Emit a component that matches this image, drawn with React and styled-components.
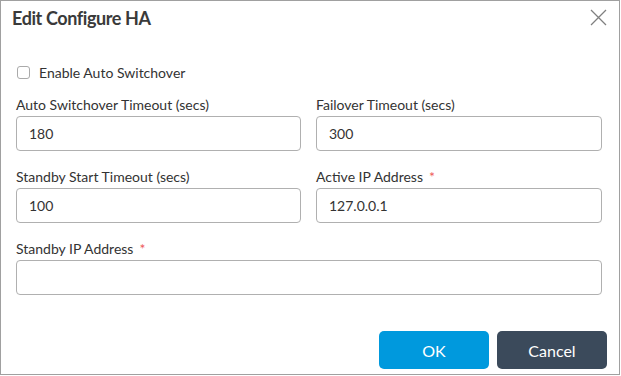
import React from 'react';
import styled, { createGlobalStyle } from 'styled-components';

const GlobalStyle = createGlobalStyle`
  html, body {
    margin: 0;
    padding: 0;
    background: #ffffff;
  }
  * {
    box-sizing: border-box;
  }
`;

const Dialog = styled.div`
  width: 620px;
  height: 375px;
  border: 1px solid #a0a0a0;
  background: #fff;
  font-family: Lato, "Open Sans", sans-serif;
  color: #333;
  display: flex;
  flex-direction: column;
`;

const Header = styled.div`
  display: flex;
  justify-content: space-between;
  align-items: center;
  height: 33px;
  padding: 0 12px 0 11px;
`;

const Title = styled.h2`
  margin: 0;
  font-size: 18px;
  font-weight: 700;
  color: #3a3a3a;
  letter-spacing: -0.4px;
`;

const CloseButton = styled.button`
  border: none;
  background: none;
  padding: 0;
  width: 18px;
  height: 18px;
  display: flex;
  align-items: center;
  justify-content: center;
  cursor: pointer;
`;

const Body = styled.div`
  padding: 30px 17px 0 15px;
  display: flex;
  flex-direction: column;
`;

const CheckRow = styled.label`
  display: flex;
  align-items: center;
  gap: 9px;
  font-size: 14px;
  color: #333;
  padding-left: 1px;
  height: 16px;
  margin-bottom: 17px;
`;

const Box = styled.span`
  width: 13px;
  height: 13px;
  border: 1px solid #aaa;
  border-radius: 3px;
  background: #fff;
`;

const Grid = styled.div`
  display: grid;
  grid-template-columns: 285px 286px;
  column-gap: 15px;
  row-gap: 18px;
`;

const Field = styled.div`
  display: flex;
  flex-direction: column;
  grid-column: ${p => (p.$full ? '1 / -1' : 'auto')};
`;

const Label = styled.div`
  font-size: 14px;
  color: #333;
  height: 16px;
  line-height: 16px;
  margin-bottom: 3px;
`;

const Req = styled.span`
  color: #ee5a5a;
  margin-left: 6px;
`;

const Input = styled.input`
  height: 35px;
  width: 100%;
  border: 1px solid #b0b0b0;
  border-radius: 4px;
  padding: 0 12px;
  font-family: Lato, "Open Sans", sans-serif;
  font-size: 14px;
  color: #333;
  outline: none;
`;

const Footer = styled.div`
  margin-top: auto;
  display: flex;
  justify-content: flex-end;
  gap: 8px;
  padding: 0 12px 5px 0;
`;

const Button = styled.button`
  width: 110px;
  height: 38px;
  border: none;
  border-radius: 5px;
  background: ${p => (p.$primary ? '#0099dd' : '#3b4a5b')};
  color: #fff;
  font-family: Lato, "Open Sans", sans-serif;
  font-size: 16px;
  cursor: pointer;
`;

function XIcon() {
  return (
    <svg width="17" height="17" viewBox="0 0 17 17">
      <path d="M1 1 L16 16 M16 1 L1 16" stroke="#808080" strokeWidth="1.3" fill="none" />
    </svg>
  );
}

export default function App() {
  return (
    <>
      <GlobalStyle />
      <Dialog>
        <Header>
          <Title>Edit Configure HA</Title>
          <CloseButton aria-label="Close"><XIcon /></CloseButton>
        </Header>
        <Body>
          <CheckRow>
            <Box />
            Enable Auto Switchover
          </CheckRow>
          <Grid>
            <Field>
              <Label>Auto Switchover Timeout (secs)</Label>
              <Input defaultValue="180" />
            </Field>
            <Field>
              <Label>Failover Timeout (secs)</Label>
              <Input defaultValue="300" />
            </Field>
            <Field>
              <Label>Standby Start Timeout (secs)</Label>
              <Input defaultValue="100" />
            </Field>
            <Field>
              <Label>Active IP Address<Req>*</Req></Label>
              <Input defaultValue="127.0.0.1" />
            </Field>
            <Field $full>
              <Label>Standby IP Address<Req>*</Req></Label>
              <Input defaultValue="" />
            </Field>
          </Grid>
        </Body>
        <Footer>
          <Button $primary>OK</Button>
          <Button>Cancel</Button>
        </Footer>
      </Dialog>
    </>
  );
}
